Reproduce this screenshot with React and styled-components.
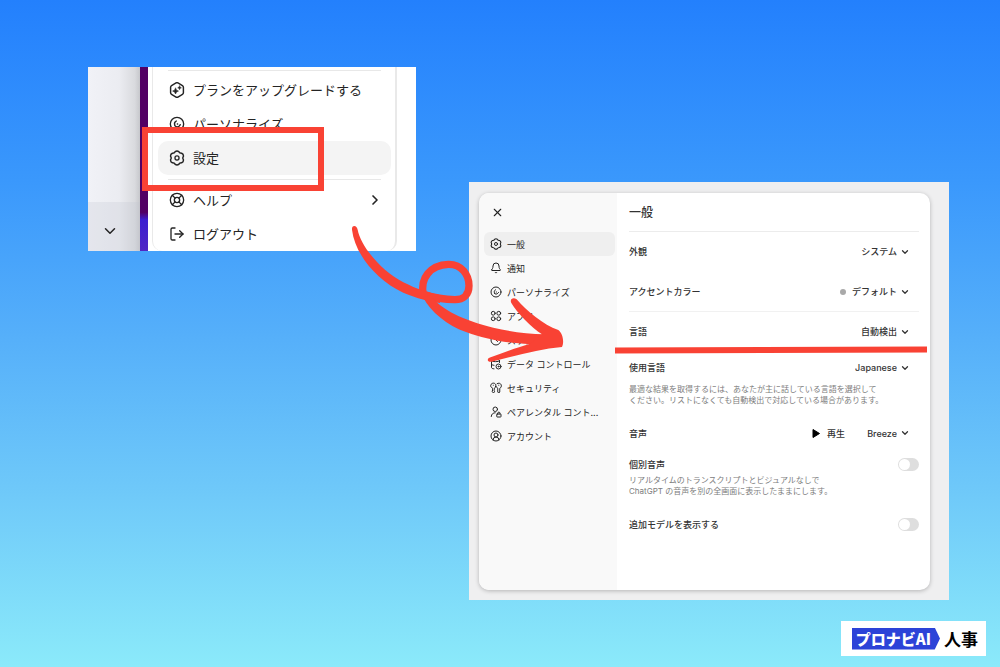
import styled, { createGlobalStyle } from "styled-components";
import {
  Bell,
  ChevronDown,
  ChevronRight,
  CircleUserRound,
  LifeBuoy,
  LogOut,
  X,
} from "lucide-react";

const red = "#f94234";

const GlobalStyle = createGlobalStyle`
  * {
    box-sizing: border-box;
  }

  body {
    margin: 0;
    color: #242424;
    font-family: Inter, "Noto Sans CJK JP", sans-serif;
  }

  button, select, input {
    margin: 0;
    padding: 0;
    border: none;
    background: transparent;
    color: inherit;
    font: inherit;
  }
`;

const Page = styled.div`
  min-height: 100vh;
  display: flex;
  flex-direction: column;
  background: linear-gradient(#2380fd, #3a98fc 27%, #55affa 50%, #6fc9f9 74%, #8beafa);
`;

const Stage = styled.main`
  display: grid;
  grid-template-columns: 41fr 60fr;
  gap: 53px;
  align-items: start;
  padding: 67px 51px 0 88px;
`;

/* ---------- account menu ---------- */

const MenuShot = styled.section`
  position: relative;
  display: grid;
  grid-template-columns: 52px 8px 1fr;
  background: #fff;
`;

const Rail = styled.div`
  display: flex;
  flex-direction: column;
  justify-content: flex-end;
  background: linear-gradient(90deg, #f1f2f7, #ebecf1 60%, #d9dade 90%, #c6c7cb);
`;

const RailButton = styled.button`
  height: 49px;
  display: flex;
  align-items: center;
  justify-content: center;
  padding: 9px 8px 0 0;
  background: rgba(190, 195, 208, 0.25);
`;

const PurpleStrip = styled.div`
  background: linear-gradient(#520064 79%, #3b1fd0 83%, #5127c4);
`;

const MenuPanel = styled.div`
  margin: 0 19px 0 4px;
  padding: 3px 4px 0 5px;
  border: solid #e9e9e9;
  border-width: 0 2px 0 1px;
  border-radius: 0 0 10px 10px;
`;

const MenuLine = styled.hr`
  height: 1px;
  margin: ${(props) => (props.$first ? "0 10px 2px" : "4px 10px 3px")};
  border: none;
  background: #e8e8e8;
`;

const MenuItem = styled.button`
  width: 100%;
  height: 34px;
  display: flex;
  align-items: center;
  gap: 8px;
  padding: 0 8px 0 11px;
  border-radius: 10px;
  background: ${(props) => (props.$active ? "#f4f4f4" : "transparent")};
  font-size: 13px;
  line-height: 16px;
  white-space: nowrap;

  svg:last-child {
    margin-left: auto;
  }

  svg:first-child {
    margin-left: 0;
  }
`;

const HighlightBox = styled.div`
  position: absolute;
  top: 60px;
  left: 54px;
  width: 182px;
  height: 64px;
  border: 6px solid ${red};
`;

/* ---------- settings window ---------- */

const SettingsShot = styled.section`
  position: relative;
  margin-top: 115px;
  padding: 11px 19px 10px 10px;
  background: #efeff0;
`;

const Dialog = styled.div`
  min-height: 397px;
  display: grid;
  grid-template-columns: 138px 1fr;
  border-radius: 10px;
  background: #fff;
  box-shadow: 0 1px 4px rgba(0, 0, 0, 0.25);
`;

const Sidebar = styled.nav`
  padding: 11px 2px 0 5px;
  border-radius: 10px 0 0 10px;
  background: #f9f9f9;
`;

const CloseButton = styled.button`
  display: flex;
  margin: 0 0 11px 5px;
  padding: 2px;
`;

const NavItem = styled.button`
  width: 100%;
  height: 24px;
  display: flex;
  align-items: center;
  gap: 5px;
  padding: 0 6px;
  border-radius: 6px;
  background: ${(props) => (props.$active ? "#efefef" : "transparent")};
  font-size: 9px;
  white-space: nowrap;
`;

const Content = styled.div`
  padding: 0 11px 0 12px;
  color: #333;
  font-size: 9px;
`;

const Title = styled.h2`
  margin: 0;
  height: 39px;
  border-bottom: 1px solid #ececec;
  font-size: 12px;
  font-weight: 500;
  line-height: 39px;
`;

const Row = styled.div`
  position: relative;
  height: ${(props) => props.$height || 40}px;
  display: flex;
  align-items: center;
  justify-content: space-between;
  border-bottom: 1px solid ${(props) => (props.$line ? "#f1f1f1" : "transparent")};
`;

const Group = styled.div`
  padding-bottom: ${(props) => props.$bottom}px;
`;

const Label = styled.label`
  font-weight: 500;
`;

const Picker = styled.span`
  display: flex;
  align-items: center;
  gap: 3px;
  padding-right: 9px;
`;

const Select = styled.select`
  appearance: none;
  font-weight: 500;
  text-align: right;
`;

const Dot = styled.span`
  width: 6px;
  height: 6px;
  margin-right: 2px;
  border-radius: 50%;
  background: #a9a9a9;
`;

const Controls = styled.div`
  display: flex;
  gap: 22px;
`;

const PlayButton = styled.button`
  display: flex;
  align-items: center;
  gap: 7px;
  font-weight: 500;
`;

const Note = styled.p`
  margin: 0;
  color: #7d7d7d;
  font-size: 8px;
  line-height: 11px;
  white-space: nowrap;
`;

const Switch = styled.input`
  appearance: none;
  width: 21px;
  height: 13px;
  padding: 1px;
  border-radius: 7px;
  background: #dedede;

  &::before {
    content: "";
    display: block;
    width: 11px;
    height: 11px;
    border-radius: 50%;
    background: #fff;
  }

  &:checked::before {
    margin-left: 8px;
  }
`;

const Underline = styled.div`
  position: absolute;
  bottom: -2px;
  left: -14px;
  right: -8px;
  height: 6px;
  background: ${red};
  transform: rotate(-0.2deg);
`;

const ArrowDrawing = styled.svg`
  position: absolute;
  top: 33px;
  left: -129px;
  width: 240px;
  height: 160px;
  pointer-events: none;
`;

/* ---------- logo ---------- */

const Footer = styled.footer`
  display: flex;
  justify-content: flex-end;
  margin-top: auto;
  padding: 0 14px 11px;
`;

const Logo = styled.a`
  height: 35px;
  display: flex;
  align-items: center;
  gap: 4px;
  padding: 0 8px 0 11px;
  background: #fff;
  color: #000;
  font-family: "Noto Sans CJK JP", sans-serif;
  font-size: 17px;
  font-weight: 700;
  text-decoration: none;
`;

const LogoTag = styled.span`
  height: 22px;
  padding: 0 9px 0 4px;
  background: #2c43d8;
  clip-path: polygon(0 0, 94% 0, 100% 50%, 94% 100%, 0 100%);
  color: #fff;
  font-size: 15px;
  font-weight: 900;
  line-height: 21px;
`;

/* ---------- icons ---------- */

function Icon({ size = 12, viewBox = "0 0 24 24", children }) {
  return (
    <svg
      width={size}
      height={size}
      viewBox={viewBox}
      fill="none"
      stroke="currentColor"
      strokeWidth="2"
      strokeLinecap="round"
      strokeLinejoin="round"
      aria-hidden="true"
    >
      {children}
    </svg>
  );
}

const GearIcon = ({ size }) => (
  <Icon size={size} viewBox="1 1 22 22">
    <path d="M9.6 3.2Q12 1.4 14.4 3.2Q15.7 5.7 18.4 5.5Q21.2 6.7 20.8 9.7Q19.2 12 20.8 14.3Q21.2 17.3 18.4 18.5Q15.7 18.3 14.4 20.8Q12 22.6 9.6 20.8Q8.3 18.3 5.6 18.5Q2.8 17.3 3.2 14.3Q4.8 12 3.2 9.7Q2.8 6.7 5.6 5.5Q8.3 5.7 9.6 3.2Z" />
    <circle cx="12" cy="12" r="2.8" strokeWidth="1.8" />
  </Icon>
);

const UpgradeIcon = ({ size }) => (
  <Icon size={size} viewBox="1 1 22 22">
    <path d="M10.7 2.3a2.6 2.6 0 0 1 2.6 0l6.2 3.6a2.6 2.6 0 0 1 1.3 2.2v7.8a2.6 2.6 0 0 1-1.3 2.2l-6.2 3.6a2.6 2.6 0 0 1-2.6 0l-6.2-3.6a2.6 2.6 0 0 1-1.3-2.2V8.1a2.6 2.6 0 0 1 1.3-2.2Z" />
    <path
      d="M10 9.500q.6 3.400 4 4q-3.400.6-4 4q-.6-3.400-4-4q3.400-.6 4-4ZM15.500 6.500q.3 2.200 2.500 2.500q-2.200.3-2.500 2.500q-.3-2.200-2.500-2.500q2.200-.3 2.500-2.500Z"
      fill="currentColor"
      strokeWidth="0.8"
    />
  </Icon>
);

const PersonalizeIcon = ({ size }) => (
  <Icon size={size}>
    <circle cx="12" cy="12" r="10" />
    <path d="M11 7.5c-2.5 1.5-3.5 4-2 6.5M8.5 14.5c2 2.5 5.5 2.5 7.5-.2M16 14l1-1M12.5 12h.5" />
  </Icon>
);

const AppsIcon = () => (
  <Icon>
    <circle cx="6.5" cy="6.5" r="3.8" />
    <circle cx="17.5" cy="6.5" r="3.8" />
    <circle cx="6.5" cy="17.5" r="3.8" />
    <circle cx="17.5" cy="17.5" r="3.8" />
  </Icon>
);

const ClockIcon = () => (
  <Icon>
    <circle cx="12" cy="12" r="10" />
    <path d="M12 6v6l3 3" />
  </Icon>
);

const DataIcon = () => (
  <Icon>
    <path d="M3 5c0-3 16-3 16 0s-16 3-16 0v14c0 1.5 2 2.5 5 2.7M3 12c0 1.5 2 2.4 5 2.6M19 5v4" />
    <circle cx="17" cy="17" r="5" />
    <circle cx="17" cy="17" r="1" />
  </Icon>
);

const KeysIcon = () => (
  <Icon>
    <path d="M5 12.5C2 11 1 8.5 1.5 6.5 2.3 3.3 5 2 7.5 2.3c2.5.3 4 2.2 4 4.5 0 2.5-1 4.7-2.5 5.7v2l-1.5 1.7 1.5 1.6v1.7L7 22l-2-2Z" />
    <path d="M14 3.5c3-2.5 7-1 8.3 2 1.2 3-.3 6-2.8 7.2V20l-2 2-2-2v-7.5c-2-1-3-2.5-3-4" />
    <path d="M6.5 6.5h.1M17.5 6.5h.1" />
  </Icon>
);

const ParentalIcon = () => (
  <Icon>
    <circle cx="10.5" cy="6.5" r="4.5" />
    <path d="M2.5 21c.5-5 3.5-7.5 8-7.5" />
    <rect x="13.5" y="16" width="8.5" height="6" rx="1" />
    <path d="M15.5 16v-1.5a2.2 2.2 0 0 1 4.4 0V16" />
  </Icon>
);

const PlayIcon = () => (
  <svg width="8" height="9" viewBox="0 0 8 9" aria-hidden="true">
    <path d="M1 .5 7.5 4.5 1 8.5Z" fill="#000" stroke="#000" strokeLinejoin="round" />
  </svg>
);

const navItems = [
  { label: "一般", icon: <GearIcon size={12} />, active: true },
  { label: "通知", icon: <Bell size={12} /> },
  { label: "パーソナライズ", icon: <PersonalizeIcon size={12} /> },
  { label: "アプリ", icon: <AppsIcon /> },
  { label: "スケジュール", icon: <ClockIcon /> },
  { label: "データ コントロール", icon: <DataIcon /> },
  { label: "セキュリティ", icon: <KeysIcon /> },
  { label: "ペアレンタル コント...", icon: <ParentalIcon /> },
  { label: "アカウント", icon: <CircleUserRound size={12} /> },
];

function Dropdown({ id, value, dot }) {
  return (
    <Picker>
      {dot && <Dot />}
      <Select id={id}>
        <option>{value}</option>
      </Select>
      <ChevronDown size={10} strokeWidth={3} />
    </Picker>
  );
}

function AccountMenu() {
  return (
    <MenuShot>
      <Rail>
        <RailButton aria-label="メニューを開く">
          <ChevronDown size={18} />
        </RailButton>
      </Rail>
      <PurpleStrip />
      <MenuPanel>
        <MenuLine $first />
        <MenuItem>
          <UpgradeIcon size={16} />
          プランをアップグレードする
        </MenuItem>
        <MenuItem>
          <PersonalizeIcon size={16} />
          パーソナライズ
        </MenuItem>
        <MenuItem $active>
          <GearIcon size={16} />
          設定
        </MenuItem>
        <MenuLine />
        <MenuItem>
          <LifeBuoy size={16} />
          ヘルプ
          <ChevronRight size={16} strokeWidth={2.5} />
        </MenuItem>
        <MenuItem>
          <LogOut size={16} />
          ログアウト
        </MenuItem>
      </MenuPanel>
      <HighlightBox />
    </MenuShot>
  );
}

function Settings() {
  return (
    <SettingsShot>
      <Dialog>
        <Sidebar>
          <CloseButton aria-label="閉じる">
            <X size={13} />
          </CloseButton>
          {navItems.map((item) => (
            <NavItem key={item.label} $active={item.active}>
              {item.icon}
              {item.label}
            </NavItem>
          ))}
        </Sidebar>
        <Content>
          <Title>一般</Title>
          <Row>
            <Label htmlFor="theme">外観</Label>
            <Dropdown id="theme" value="システム" />
          </Row>
          <Row $line>
            <Label htmlFor="accent">アクセントカラー</Label>
            <Dropdown id="accent" value="デフォルト" dot />
          </Row>
          <Row>
            <Label htmlFor="language">言語</Label>
            <Dropdown id="language" value="自動検出" />
            <Underline />
          </Row>
          <Group $bottom={6}>
            <Row $height={32}>
              <Label htmlFor="spoken">使用言語</Label>
              <Dropdown id="spoken" value="Japanese" />
            </Row>
            <Note>
              最適な結果を取得するには、あなたが主に話している言語を選択して
              <br />
              ください。リストになくても自動検出で対応している場合があります。
            </Note>
          </Group>
          <Row $height={43}>
            <Label htmlFor="voice">音声</Label>
            <Controls>
              <PlayButton>
                <PlayIcon />
                再生
              </PlayButton>
              <Dropdown id="voice" value="Breeze" />
            </Controls>
          </Row>
          <Group $bottom={8}>
            <Row $height={20}>
              <Label htmlFor="separate">個別音声</Label>
              <Switch id="separate" type="checkbox" role="switch" />
            </Row>
            <Note>
              リアルタイムのトランスクリプトとビジュアルなしで
              <br />
              ChatGPT の音声を別の全画面に表示したままにします。
            </Note>
          </Group>
          <Row>
            <Label htmlFor="models">追加モデルを表示する</Label>
            <Switch id="models" type="checkbox" role="switch" />
          </Row>
        </Content>
      </Dialog>
      <ArrowDrawing viewBox="0 0 720 480" aria-hidden="true">
        <path
          d="M250 238C240 190 270 150 325 148C365 147 387 180 387 212C387 240 370 254 345 254C310 254 280 248 250 238Z"
          fill="none"
          stroke={red}
          strokeWidth="22"
        />
        <path
          d="M36 44Q35 33 43 33Q50 33 53 44C62 92 120 165 190 202C230 222 260 232 300 240L300 264C270 260 230 250 190 233C110 196 45 118 36 44Z"
          fill={red}
        />
        <path
          d="M270 240C305 285 370 316 460 338C510 350 560 357 615 358L605 388C510 388 440 374 380 352C320 330 272 290 250 248Z"
          fill={red}
        />
        <path
          d="M606 358C575 338 530 292 514 264C508 252 520 245 530 253C560 288 610 330 655 345C669 355 673 382 666 396C600 402 540 419 455 440C440 442 440 430 452 427C495 410 540 395 570 386Z"
          fill={red}
        />
      </ArrowDrawing>
    </SettingsShot>
  );
}

export default function App() {
  return (
    <Page>
      <GlobalStyle />
      <Stage>
        <AccountMenu />
        <Settings />
      </Stage>
      <Footer>
        <Logo href="#">
          <LogoTag>プロナビAI</LogoTag>
          人事
        </Logo>
      </Footer>
    </Page>
  );
}
